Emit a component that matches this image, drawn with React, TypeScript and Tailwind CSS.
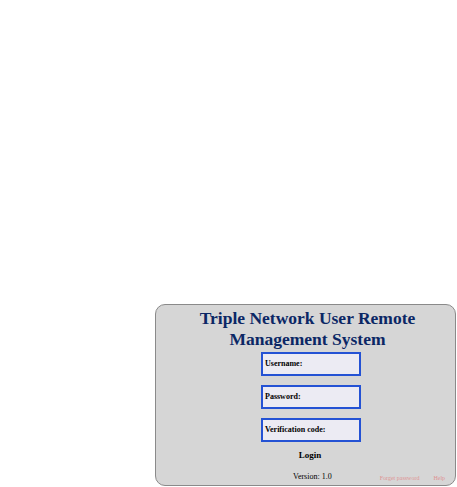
export default function App() {
  const fields = ['Username:', 'Password:', 'Verification code:'];
  return (
    <div className="w-[457px] h-[487px] bg-white overflow-hidden pt-[304px] pl-[155px]" style={{ fontFamily: '"Liberation Serif", "Times New Roman", serif' }}>
      <div className="w-[301px] h-[182px] rounded-[10px] border border-[#8a8a8a] bg-[#d6d6d6] flex flex-col">
        {/* Title */}
        <h1 className="mt-[3px] text-center text-[17.5px] leading-[21px] font-bold text-[#0b2765] pl-[4px]">
          Triple Network User Remote
          <br />
          Management System
        </h1>

        {/* Fields */}
        <div className="mt-[2px] flex flex-col gap-[9px] pl-[105px]">
          {fields.map((f) => (
            <div key={f} className="w-[100px] h-[24px] border-2 border-[#2452d4] bg-[#ecebf3] flex items-center pl-[2px]">
              <span className="text-[8px] font-bold text-black leading-none">{f}</span>
            </div>
          ))}
        </div>

        {/* Login */}
        <div className="mt-[9px] pl-[9px] text-center text-[9px] font-bold text-black leading-none">Login</div>

        {/* Footer */}
        <div className="mt-[13px] flex items-end pl-[137px]">
          <span className="text-[8px] text-black leading-none">Version: 1.0</span>
          <span className="ml-[48px] text-[6px] text-[#df9494] leading-none">Forget password</span>
          <span className="ml-[14px] text-[6px] text-[#df9494] leading-none">Help</span>
        </div>
      </div>
    </div>
  );
}
